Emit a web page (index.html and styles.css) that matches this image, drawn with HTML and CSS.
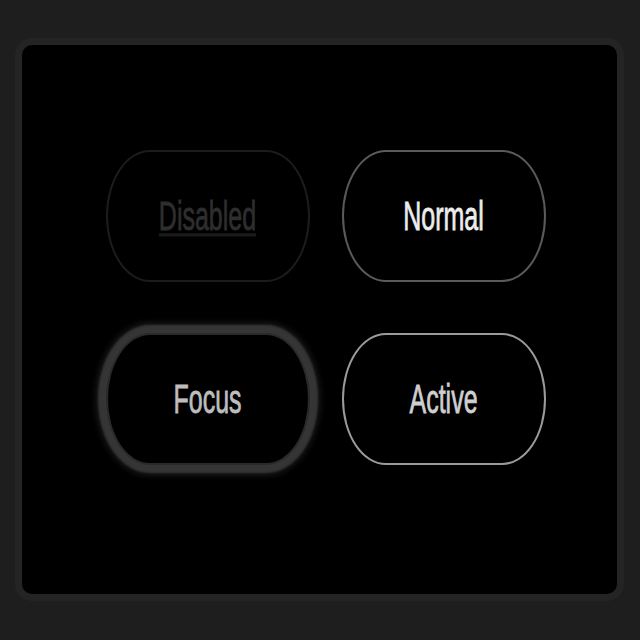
FILE: index.html
```html
<!DOCTYPE html>
<html>
<head>
<meta charset="utf-8">
<link rel="stylesheet" href="styles.css">
</head>
<body>
<div class="panel">
  <div class="grid">
    <button class="btn btn-disabled" disabled><span class="label">Disabled</span></button>
    <button class="btn btn-normal"><span class="label">Normal</span></button>
    <button class="btn btn-focus"><span class="label">Focus</span></button>
    <button class="btn btn-active"><span class="label">Active</span></button>
  </div>
</div>
</body>
</html>
```
FILE: styles.css
```css
html, body {
  margin: 0;
  height: 100%;
  background: #1e1e1e;
}
body {
  box-sizing: border-box;
  padding: 45px 23px 46px 22px;
}
.panel {
  height: 100%;
  background: #000;
  border-radius: 10px;
  box-shadow: 0 0 0 7px #242424;
  display: flex;
  justify-content: center;
  align-items: center;
  padding: 0 0 24px 12px;
  box-sizing: border-box;
}
.grid {
  display: grid;
  grid-template-columns: 204px 204px;
  grid-template-rows: 132px 132px;
  column-gap: 32px;
  row-gap: 51px;
}
.btn {
  background: #000;
  border: 2px solid #555;
  border-radius: 44px / 66px;
  font-family: "Liberation Sans", Arial, sans-serif;
  font-size: 25px;
  color: #e6e6e6;
  padding: 0;
  display: flex;
  align-items: center;
  justify-content: center;
}
.label {
  display: inline-block;
  transform: scaleY(1.6);
  -webkit-text-stroke: 0.5px currentColor;
}
.btn-disabled {
  border-color: #1c1c1c;
  color: #2e2e2e;
}
.btn-disabled .label {
  text-decoration: underline;
  text-decoration-color: #1a1a1a;
}
.btn-normal {
  border-color: #5a5a5a;
  color: #ececec;
}
.btn-focus {
  border-color: #2a2a2a;
  color: #bdbdbd;
  box-shadow: 0 0 2px 8px #353535, 0 0 6px 10px #1c1c1c;
}
.btn-active {
  border-color: #9a9a9a;
  color: #cfcfcf;
}
```
